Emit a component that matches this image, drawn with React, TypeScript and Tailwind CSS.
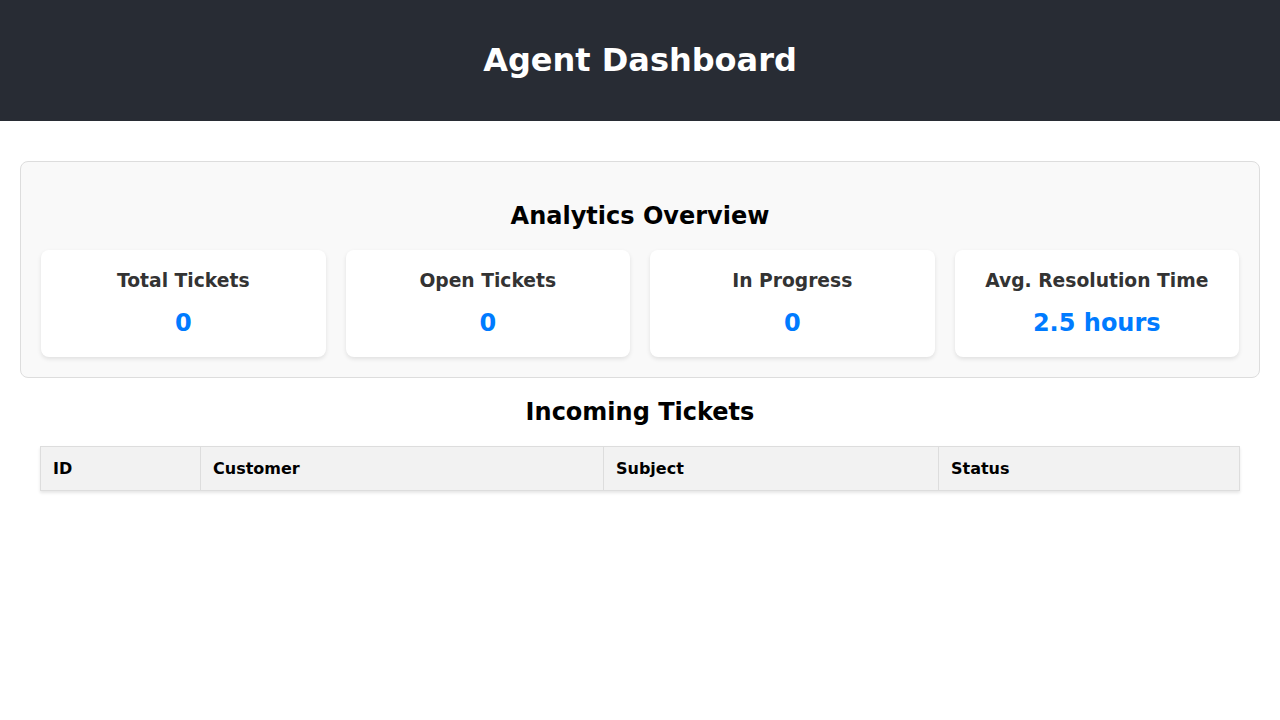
import React from 'react';

interface Stat {
  label: string;
  value: string;
}

const stats: Stat[] = [
  { label: 'Total Tickets', value: '0' },
  { label: 'Open Tickets', value: '0' },
  { label: 'In Progress', value: '0' },
  { label: 'Avg. Resolution Time', value: '2.5 hours' },
];

const columns = [
  { name: 'ID', width: 'w-[160px]' },
  { name: 'Customer', width: 'w-[403px]' },
  { name: 'Subject', width: 'w-[335px]' },
  { name: 'Status', width: '' },
];

const StatCard: React.FC<{ stat: Stat }> = ({ stat }) => (
  <div className="bg-white rounded-lg shadow-[0_2px_4px_rgba(0,0,0,0.1)] pt-[20px] pb-[20px] flex flex-col items-center">
    <h3 className="text-[18.72px] font-bold text-[#333] leading-[22px]">{stat.label}</h3>
    <p className="mt-[17px] text-[24px] font-bold text-[#007bff] leading-[28px]">{stat.value}</p>
  </div>
);

export default function App() {
  return (
    <div className="min-h-screen bg-white font-['DejaVu_Sans',sans-serif]">
      {/* Header */}
      <header className="h-[121px] bg-[#282c34] flex items-center justify-center">
        <h1 className="text-[32px] font-bold text-white leading-[37px]">Agent Dashboard</h1>
      </header>

      {/* Analytics */}
      <section className="mt-[40px] mx-[20px] border border-[#ddd] bg-[#f9f9f9] rounded-lg px-[20px] pb-[20px] pt-[20px]">
        <h2 className="text-center text-[24px] font-bold text-black leading-[28px] mt-[20px] mb-[20px]">
          Analytics Overview
        </h2>
        <div className="grid grid-cols-4 gap-[20px]">
          {stats.map((s) => (
            <StatCard key={s.label} stat={s} />
          ))}
        </div>
      </section>

      {/* Tickets */}
      <section className="px-[40px]">
        <h2 className="text-center text-[24px] font-bold text-black leading-[28px] mt-[20px] mb-[20px]">
          Incoming Tickets
        </h2>
        <table className="w-full border-collapse shadow-[0_2px_3px_rgba(0,0,0,0.1)]">
          <thead>
            <tr className="bg-[#f2f2f2]">
              {columns.map((c) => (
                <th
                  key={c.name}
                  className={`${c.width} border border-[#ddd] px-[12px] py-[12px] text-left text-[16px] font-bold text-black leading-[19px]`}
                >
                  {c.name}
                </th>
              ))}
            </tr>
          </thead>
          <tbody />
        </table>
      </section>
    </div>
  );
}
